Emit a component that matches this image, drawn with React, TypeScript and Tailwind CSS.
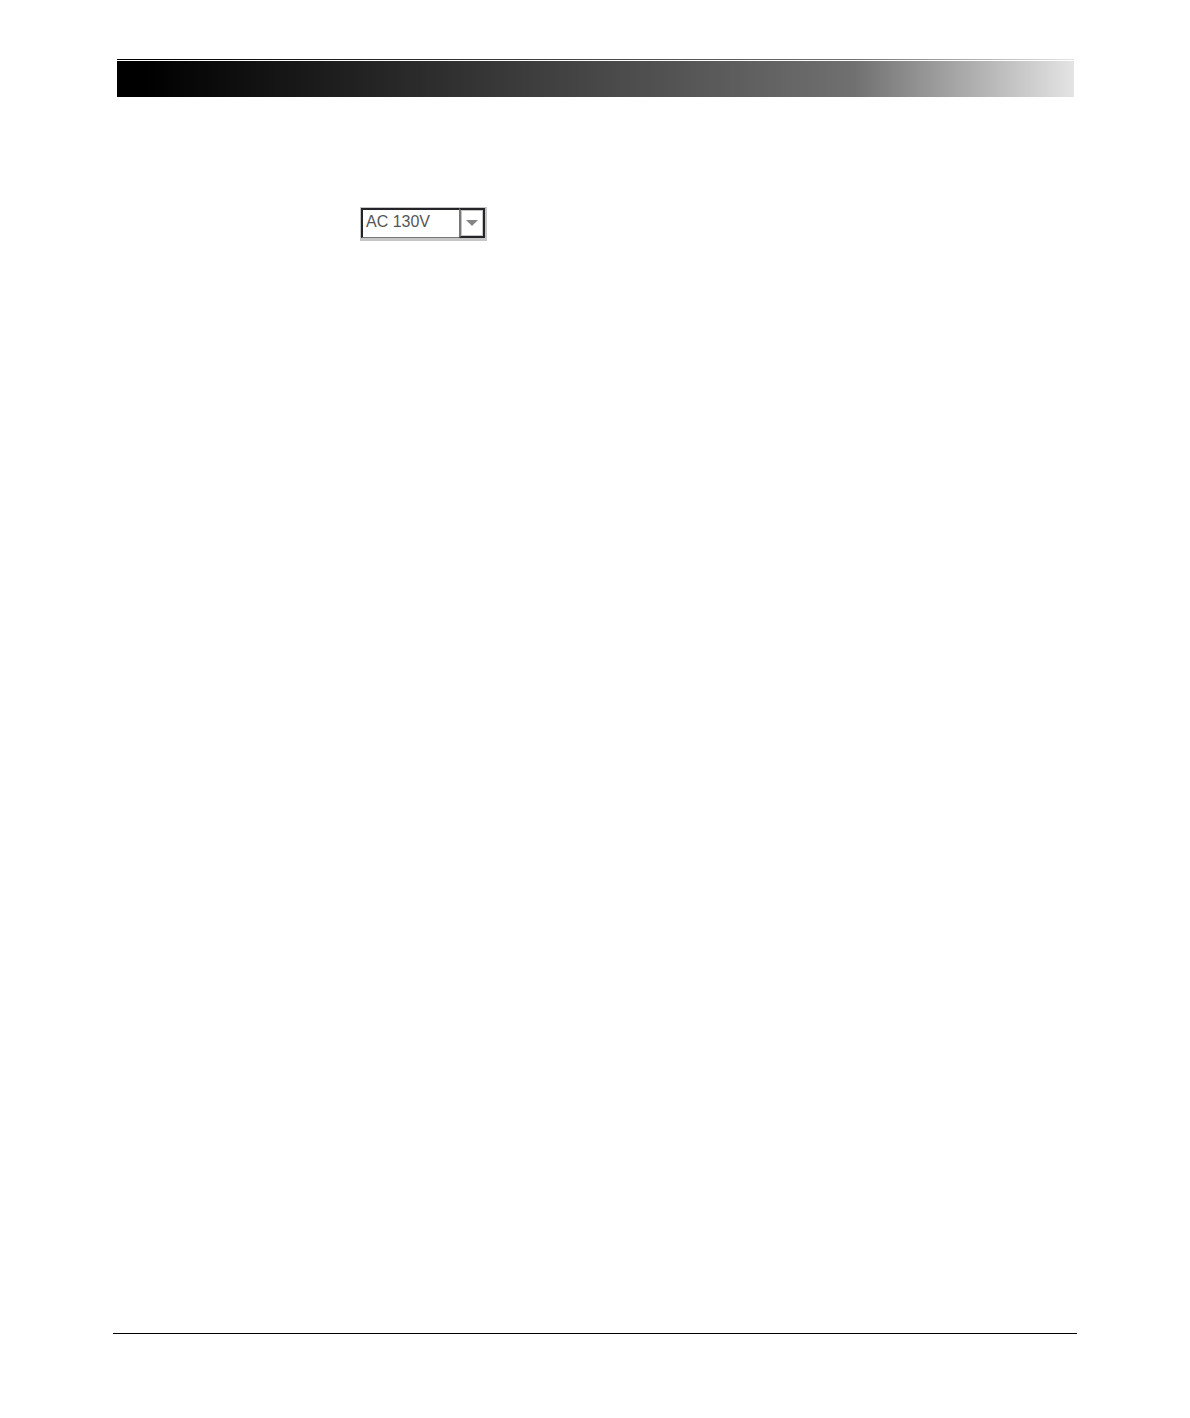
import React from 'react';

const voltages = ['AC 110V', 'AC 120V', 'AC 130V', 'AC 220V', 'AC 240V'];

const HeaderBar = () => (
  <header className="mr-[3px] ml-1">
    <div className="h-px bg-linear-to-r/srgb from-black from-3% via-[#707070] via-77% to-[#e4e4e4]" />
    <div className="mt-px h-9 bg-linear-to-r/srgb from-black from-3% via-[#707070] via-77% to-[#e4e4e4]" />
  </header>
);

const VoltageSelect = () => {
  const [voltage, setVoltage] = React.useState('AC 130V');

  return (
    <div className="relative w-[127px] border-t border-r-2 border-b-3 border-l border-[#c6c6c6]">
      <select
        aria-label="Voltage"
        value={voltage}
        onChange={(e) => setVoltage(e.target.value)}
        className="block h-[30px] w-full appearance-none rounded-none border-2 border-b border-[#242428] border-b-[#777777] bg-white pb-1 pl-[3px] font-['Liberation_Sans'] text-base leading-6 text-[#555555] outline-none"
      >
        {voltages.map((v) => (
          <option key={v} value={v}>
            {v}
          </option>
        ))}
      </select>
      {/* drop-down button face, drawn over the select */}
      <span className="pointer-events-none absolute inset-y-0 right-0 flex w-[26px] items-center justify-center border-2 border-[#242428] border-l-[#777777]">
        <span className="flex h-full w-full items-center justify-center border border-[#c6c6c6]">
          <svg width="12" height="6" viewBox="0 0 12 6" className="fill-[#858585]">
            <path d="M0 0h12L6 6z" />
          </svg>
        </span>
      </span>
    </div>
  );
};

const App = () => {
  return (
    <div className="flex min-h-screen flex-col bg-white px-[113px] pt-[59px] pb-21">
      <HeaderBar />
      <main className="flex-1 pt-[110px] pl-[247px]">
        <VoltageSelect />
      </main>
      <footer className="border-t border-black" />
    </div>
  );
};

export default App;
